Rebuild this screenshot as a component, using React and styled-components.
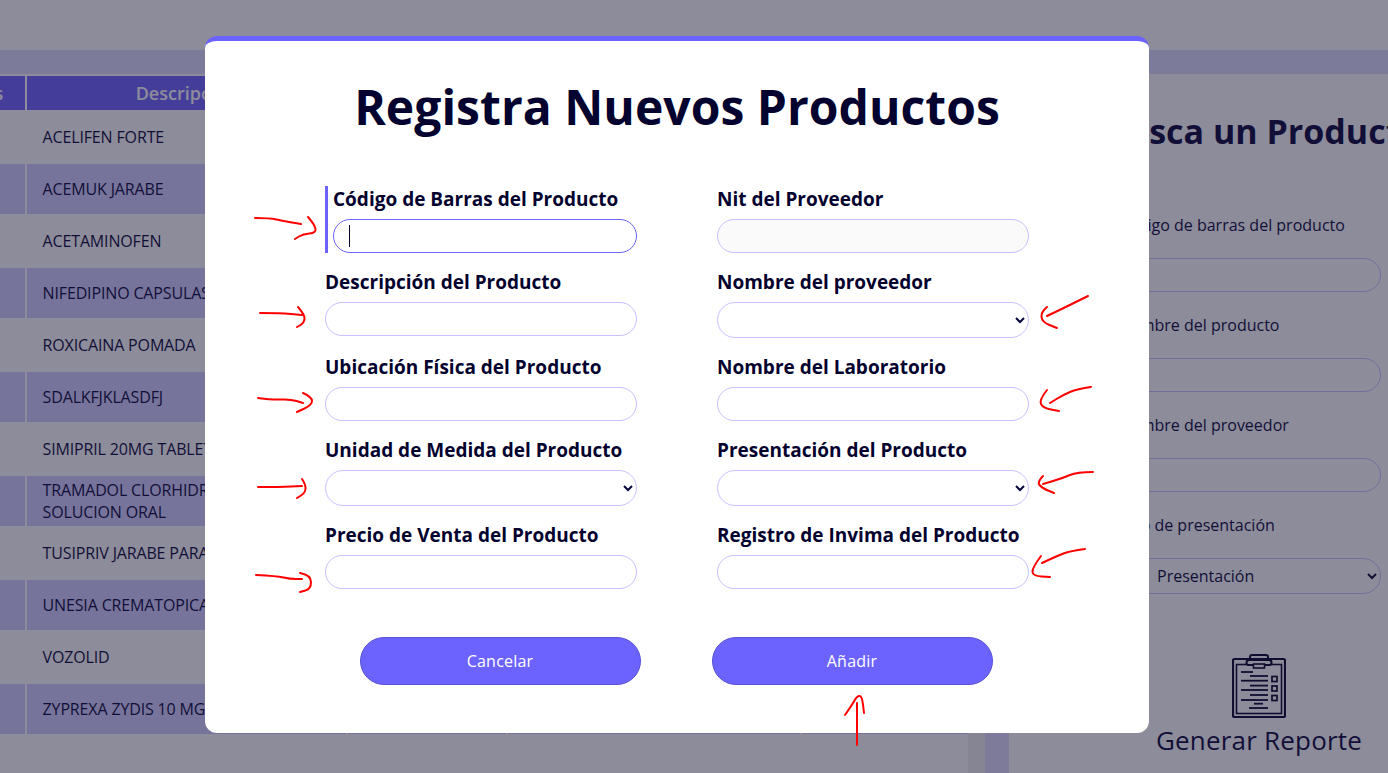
import styled, { createGlobalStyle } from "styled-components";

const GlobalStyle = createGlobalStyle`
    * {
        box-sizing: border-box;
    }

    html, body {
        margin: 0;
        height: 100%;
        overflow: hidden;
        background: #fff;
        font-family: "Open Sans", "Liberation Sans", sans-serif;
        color: #07053a;
    }
`;

const products = [
    ["ACELIFEN FORTE"],
    ["ACEMUK JARABE"],
    ["ACETAMINOFEN"],
    ["NIFEDIPINO CAPSULAS"],
    ["ROXICAINA POMADA"],
    ["SDALKFJKLASDFJ"],
    ["SIMIPRIL 20MG TABLETAS"],
    ["TRAMADOL CLORHIDRATO", "SOLUCION ORAL"],
    ["TUSIPRIV JARABE PARA"],
    ["UNESIA CREMATOPICA"],
    ["VOZOLID"],
    ["ZYPREXA ZYDIS 10 MG"],
];

const searchFields = ["Código de barras del producto", "Nombre del producto", "Nombre del proveedor"];

const formFields = [
    { label: "Código de Barras del Producto", active: true },
    { label: "Nit del Proveedor", readOnly: true },
    { label: "Descripción del Producto" },
    { label: "Nombre del proveedor", select: true },
    { label: "Ubicación Física del Producto" },
    { label: "Nombre del Laboratorio" },
    { label: "Unidad de Medida del Producto", select: true },
    { label: "Presentación del Producto", select: true },
    { label: "Precio de Venta del Producto" },
    { label: "Registro de Invima del Producto" },
];

// hand drawn marks on top of the screenshot, page coordinates
const scribbles = [
    [[255, 218], [270, 218], [283, 221], [301, 224]],
    [[308, 217], [315, 225], [316, 233], [303, 234], [295, 239]],
    [[260, 313], [280, 313], [302, 315]],
    [[298, 307], [305, 315], [304, 323], [297, 327]],
    [[258, 398], [273, 400], [290, 399], [303, 403]],
    [[303, 393], [312, 397], [312, 405], [297, 412]],
    [[258, 487], [280, 487], [302, 486]],
    [[302, 479], [306, 485], [305, 493], [297, 498]],
    [[256, 575], [277, 576], [290, 579], [302, 579]],
    [[300, 573], [311, 575], [311, 589], [300, 592]],
    [[1088, 296], [1070, 305], [1047, 316]],
    [[1047, 307], [1041, 312], [1042, 322], [1057, 328]],
    [[1091, 387], [1077, 389], [1063, 395], [1050, 403]],
    [[1047, 390], [1039, 400], [1043, 408], [1059, 411]],
    [[1093, 472], [1077, 472], [1063, 478], [1043, 484]],
    [[1043, 476], [1037, 482], [1042, 488], [1054, 493]],
    [[1085, 549], [1070, 551], [1057, 556], [1042, 563]],
    [[1041, 556], [1032, 568], [1033, 576], [1050, 577]],
    [[857, 745], [857, 703]],
    [[845, 715], [852, 705], [857, 696], [862, 696], [864, 713]],
];

function smoothPath(points) {
    let d = `M${points[0][0]} ${points[0][1]}`;
    for (let i = 1; i < points.length - 1; i++) {
        const midX = (points[i][0] + points[i + 1][0]) / 2;
        const midY = (points[i][1] + points[i + 1][1]) / 2;
        d += ` Q${points[i][0]} ${points[i][1]} ${midX} ${midY}`;
    }
    const last = points[points.length - 1];
    return `${d} L${last[0]} ${last[1]}`;
}

function ReportIcon() {
    const lines = [
        [9, 21, 18], [18, 36, 22], [9, 36, 26.7], [18, 36, 31.6], [9, 36, 36],
        [18, 36, 41], [9, 36, 46], [22, 31, 49.7], [17, 36, 54],
    ];
    return (
        <svg width="54" height="64" viewBox="0 0 54 64" fill="none" stroke="#03002a">
            <rect x="1" y="5" width="52" height="58" rx="1.5" strokeWidth="2.2" />
            <rect x="4.5" y="10.5" width="45" height="49" strokeWidth="1.6" />
            <path d="M18 6V3a2 2 0 0 1 2-2h14a2 2 0 0 1 2 2v3" strokeWidth="2" fill="none" />
            <rect x="14.5" y="6" width="25" height="5" rx="2.5" strokeWidth="2" fill="#fff" />
            <rect x="21.5" y="10" width="11" height="4" strokeWidth="1.6" fill="#fff" />
            {lines.map(([x1, x2, y]) => (
                <path key={`${x1}-${y}`} d={`M${x1} ${y}H${x2}`} strokeWidth="1.8" />
            ))}
            <rect x="40" y="22.5" width="5" height="5" strokeWidth="1.7" />
            <rect x="40" y="32" width="5" height="5" strokeWidth="1.7" />
            <rect x="40" y="41.5" width="5" height="5" strokeWidth="1.7" />
        </svg>
    );
}

function FormField({ field }) {
    return (
        <Field $active={field.active}>
            <FieldLabel>{field.label}</FieldLabel>
            {field.select ? (
                <FormSelect>
                    <option></option>
                </FormSelect>
            ) : (
                <InputWrap>
                    <FormInput $active={field.active} $readOnly={field.readOnly} readOnly={field.readOnly} />
                    {field.active && <Caret />}
                </InputWrap>
            )}
        </Field>
    );
}

export default function App() {
    return (
        <>
            <GlobalStyle />
            <Page>
                <TopBar />
                <Band />
                <Main>
                    <TableArea>
                        <ProductTable>
                            <colgroup>
                                <col width="112" />
                                <col width="319" />
                                <col width="158" />
                                <col width="292" />
                                <col width="166" />
                            </colgroup>
                            <thead>
                                <tr>
                                    <th>Códigos</th>
                                    <th>Descripción</th>
                                    <th></th>
                                    <th></th>
                                    <th></th>
                                </tr>
                            </thead>
                            <tbody>
                                {products.map((lines) => (
                                    <tr key={lines[0]}>
                                        <td></td>
                                        <td>
                                            {lines.map((line) => (
                                                <div key={line}>{line}</div>
                                            ))}
                                        </td>
                                        <td></td>
                                        <td></td>
                                        <td></td>
                                    </tr>
                                ))}
                            </tbody>
                        </ProductTable>
                    </TableArea>
                    <ScrollTrack />
                    <SideStrip />
                    <SearchPanel>
                        <SearchTitle>Busca un Producto</SearchTitle>
                        {searchFields.map((label) => (
                            <div key={label}>
                                <SearchLabel>{label}</SearchLabel>
                                <SearchInput />
                            </div>
                        ))}
                        <SearchLabel>Tipo de presentación</SearchLabel>
                        <SearchSelect>
                            <option>Presentación</option>
                        </SearchSelect>
                        <ReportLink>
                            <ReportIcon />
                            <span>Generar Reporte</span>
                        </ReportLink>
                    </SearchPanel>
                </Main>
            </Page>
            <Overlay>
                <Modal>
                    <ModalTitle>Registra Nuevos Productos</ModalTitle>
                    <FormGrid>
                        {formFields.map((field) => (
                            <FormField key={field.label} field={field} />
                        ))}
                    </FormGrid>
                    <Buttons>
                        <ModalButton>Cancelar</ModalButton>
                        <ModalButton>Añadir</ModalButton>
                    </Buttons>
                </Modal>
                <Scribbles viewBox="0 0 1388 773" fill="none" stroke="#f00" strokeWidth="2" strokeLinecap="round" strokeLinejoin="round">
                    {scribbles.map((points) => (
                        <path key={points.join()} d={smoothPath(points)} />
                    ))}
                </Scribbles>
            </Overlay>
        </>
    );
}

const Page = styled.div`
    display: flex;
    flex-direction: column;
    height: 100vh;
    overflow: hidden;
`;

const TopBar = styled.div`
    height: 50px;
    flex: none;
    background-color: #fff;
`;

const Band = styled.div`
    height: 24px;
    flex: none;
    background-color: #dfdcff;
`;

const Main = styled.div`
    display: flex;
    flex: 1;
    min-height: 0;
`;

const TableArea = styled.div`
    width: 968px;
    flex: none;
    overflow: hidden;
`;

const ProductTable = styled.table`
    width: 1059px;
    margin-left: -89px;
    table-layout: fixed;
    border-collapse: separate;
    border-spacing: 2px;

    th {
        height: 34px;
        padding: 0;
        background-color: #6c63ff;
        color: #fff;
        font-size: 18px;
        font-weight: 600;
        text-align: center;
    }

    td {
        height: 50px;
        padding: 0 16px 0 15.6px;
        font-size: 16px;
        line-height: 22px;
        letter-spacing: -0.15px;
        color: #07053a;
    }

    tbody tr:nth-child(even) td {
        background-color: #d1cfff;
    }
`;

const ScrollTrack = styled.div`
    width: 17px;
    flex: none;
    background-color: #f1f1f1;
`;

const SideStrip = styled.div`
    width: 24px;
    flex: none;
    background-color: #e0dbff;
`;

const SearchPanel = styled.section`
    flex: 1;
    min-width: 0;
    display: flex;
    flex-direction: column;
    padding: 36px 7px 0 98px;
`;

const SearchTitle = styled.h2`
    margin: -1px 0 60px -3px;
    font-size: 34px;
    line-height: 44px;
    font-weight: 700;
    white-space: nowrap;
    color: #07053a;
`;

const SearchLabel = styled.div`
    height: 24px;
    margin: 0 0 21px 11px;
    font-size: 16px;
    line-height: 24px;
    color: #07053a;
`;

const SearchInput = styled.input`
    display: block;
    width: 100%;
    height: 34px;
    margin-bottom: 21px;
    border: 1px solid #c5c1ff;
    border-radius: 17px;
    background-color: #fff;
`;

const SearchSelect = styled.select`
    display: block;
    width: 100%;
    height: 36px;
    padding-left: 45px;
    border: 1px solid #c5c1ff;
    border-radius: 18px;
    background-color: #fff;
    font-family: "Open Sans", sans-serif;
    font-size: 16px;
    color: #07053a;
`;

const ReportLink = styled.div`
    display: flex;
    flex-direction: column;
    align-items: center;
    gap: 5px;
    align-self: flex-end;
    width: 244px;
    margin-top: 60px;
    font-size: 26px;
    line-height: 34px;
    letter-spacing: 0.2px;
    color: #07053a;

    span {
        white-space: nowrap;
    }
`;

const Overlay = styled.div`
    position: fixed;
    inset: 0;
    display: flex;
    justify-content: center;
    align-items: flex-start;
    padding: 36px 34px 0 0;
    background-color: rgba(27, 25, 53, 0.5);
`;

const Modal = styled.div`
    width: 944px;
    height: 697px;
    padding-top: 36px;
    border-top: 5px solid #6c63ff;
    border-radius: 12px;
    background-color: #fff;
`;

const ModalTitle = styled.h1`
    margin: 0 0 49px;
    font-size: 48px;
    line-height: 60px;
    font-weight: 700;
    letter-spacing: 0.04px;
    text-align: center;
    color: #04022e;
`;

const FormGrid = styled.div`
    display: grid;
    grid-template-columns: 312px 312px;
    justify-content: center;
    column-gap: 80px;
    row-gap: 16px;
    align-items: start;
`;

const Field = styled.div`
    padding-left: ${(props) => (props.$active ? "5px" : "0")};
    border-left: ${(props) => (props.$active ? "3px solid #6c63ff" : "none")};
`;

const FieldLabel = styled.label`
    display: block;
    height: 26px;
    margin-bottom: 7px;
    font-size: 19px;
    line-height: 26px;
    font-weight: 700;
    color: #04022e;
`;

const InputWrap = styled.div`
    position: relative;
`;

const FormInput = styled.input`
    display: block;
    width: 100%;
    height: 34px;
    padding: 0 16px;
    border: 1px solid ${(props) => (props.$active ? "#6c63ff" : "#c5c1ff")};
    border-radius: 17px;
    outline: none;
    background-color: ${(props) => (props.$readOnly ? "#fafafa" : "#fff")};
`;

const Caret = styled.span`
    position: absolute;
    top: 6px;
    left: 16px;
    width: 1px;
    height: 22px;
    background-color: #04022e;
`;

const FormSelect = styled.select`
    display: block;
    width: 100%;
    height: 36px;
    padding: 0 16px;
    border: 1px solid #c5c1ff;
    border-radius: 18px;
    background-color: #fff;
    color: #07053a;
    font-family: "Open Sans", sans-serif;
    font-size: 16px;
`;

const Buttons = styled.div`
    display: flex;
    justify-content: center;
    gap: 71px;
    margin-top: 48px;
    padding-right: 2px;
`;

const ModalButton = styled.button`
    width: 281px;
    height: 48px;
    border: 1px solid #5a52d5;
    border-radius: 24px;
    background-color: #6c63ff;
    color: #fff;
    font-family: "Open Sans", sans-serif;
    font-size: 16px;
    letter-spacing: 0.2px;
`;

const Scribbles = styled.svg`
    position: absolute;
    top: 0;
    left: 0;
    width: 1388px;
    height: 773px;
    pointer-events: none;
`;
